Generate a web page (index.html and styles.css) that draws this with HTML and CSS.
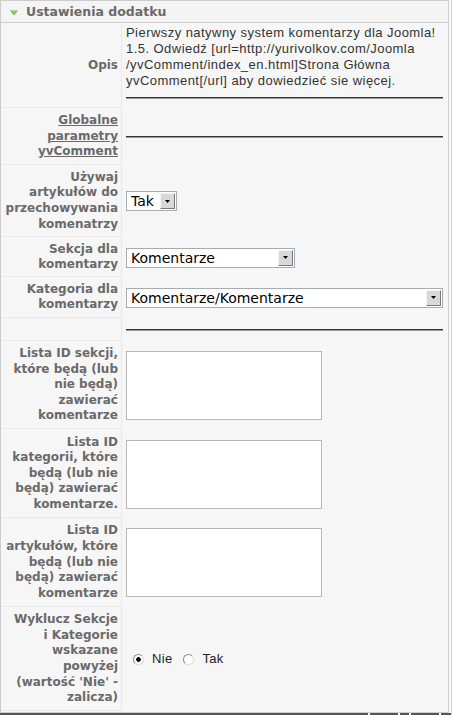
FILE: index.html
```html
<!DOCTYPE html>
<html lang="pl">
<head>
<meta charset="utf-8">
<title>Ustawienia dodatku</title>
<link rel="stylesheet" href="styles.css">
</head>
<body>
<div class="page">
  <div class="panel">
    <h3 class="toggler">
      <svg class="arrow" width="8" height="6" viewBox="0 0 8 6" aria-hidden="true"><path d="M0 0.5H8L4 5.5Z" fill="#76b83f"/><path d="M1.5 1H6.5L4 3.5Z" fill="#9ad06a"/></svg>
      <span>Ustawienia dodatku</span>
    </h3>
    <div class="content">
      <table class="paramlist">
        <tr>
          <td class="key">Opis</td>
          <td class="val val-desc">
            <div class="desc">Pierwszy natywny system komentarzy dla Joomla!<br>1.5. Odwiedź [url=http://yurivolkov.com/Joomla<br>/yvComment/index_en.html]Strona Główna<br>yvComment[/url] aby dowiedzieć sie więcej.</div>
            <hr class="rule rule-desc">
          </td>
        </tr>
        <tr>
          <td class="key"><span class="tip">Globalne<br>parametry<br>yvComment</span></td>
          <td class="val"><hr class="rule"></td>
        </tr>
        <tr>
          <td class="key">Używaj<br>artykułów do<br>przechowywania<br>komenatrzy</td>
          <td class="val">
            <div class="select">
              <select class="sel-tak"><option>Tak</option><option>Nie</option></select>
              <span class="select-btn"><svg width="5" height="3" viewBox="0 0 5 3" aria-hidden="true"><path d="M0 0H5L2.5 3Z" fill="#000"/></svg></span>
            </div>
          </td>
        </tr>
        <tr>
          <td class="key key-tight">Sekcja dla<br>komentarzy</td>
          <td class="val">
            <div class="select">
              <select class="sel-sekcja"><option>Komentarze</option></select>
              <span class="select-btn"><svg width="5" height="3" viewBox="0 0 5 3" aria-hidden="true"><path d="M0 0H5L2.5 3Z" fill="#000"/></svg></span>
            </div>
          </td>
        </tr>
        <tr>
          <td class="key key-tight">Kategoria dla<br>komentarzy</td>
          <td class="val">
            <div class="select">
              <select class="sel-kat"><option>Komentarze/Komentarze</option></select>
              <span class="select-btn"><svg width="5" height="3" viewBox="0 0 5 3" aria-hidden="true"><path d="M0 0H5L2.5 3Z" fill="#000"/></svg></span>
            </div>
          </td>
        </tr>
        <tr>
          <td class="key key-empty"></td>
          <td class="val"><hr class="rule rule-empty"></td>
        </tr>
        <tr>
          <td class="key key-tall">Lista ID sekcji,<br>które będą (lub<br>nie będą)<br>zawierać<br>komentarze</td>
          <td class="val"><textarea class="ta" rows="4" cols="30"></textarea></td>
        </tr>
        <tr>
          <td class="key key-tall">Lista ID<br>kategorii, które<br>będą (lub nie<br>będą) zawierać<br>komentarze.</td>
          <td class="val"><textarea class="ta" rows="4" cols="30"></textarea></td>
        </tr>
        <tr>
          <td class="key key-tall">Lista ID<br>artykułów, które<br>będą (lub nie<br>będą) zawierać<br>komentarze</td>
          <td class="val"><textarea class="ta" rows="4" cols="30"></textarea></td>
        </tr>
        <tr>
          <td class="key key-tall">Wyklucz Sekcje<br>i Kategorie<br>wskazane<br>powyżej<br>(wartość 'Nie' -<br>zalicza)</td>
          <td class="val">
            <div class="radios">
              <label class="radio"><input type="radio" name="exclude" checked>Nie</label>
              <label class="radio"><input type="radio" name="exclude">Tak</label>
            </div>
          </td>
        </tr>
      </table>
    </div>
  </div>
  <div class="hbar">
    <div class="hbar-track"></div>
    <div class="hbar-box hbar-a"></div>
    <div class="hbar-box hbar-b"></div>
    <div class="hbar-box hbar-c"></div>
    <div class="hbar-box hbar-d"></div>
  </div>
</div>
</body>
</html>
```
FILE: styles.css
```css
html, body {
  margin: 0;
  padding: 0;
  background: #ffffff;
}

body {
  font-family: "Liberation Sans", Arial, sans-serif;
}

.page {
  width: 451px;
  border-right: 1px solid #d0d0d0;
  background: #fafafa;
  min-height: 715px;
}

.panel {
  width: 447px;
  border: 1px solid #cccccc;
  background: #f6f6f6;
}

.toggler {
  margin: 0;
  height: 21px;
  border-bottom: 1px solid #cccccc;
  display: flex;
  align-items: center;
  padding-left: 9px;
  font: bold 12.5px/21px "DejaVu Sans", Verdana, sans-serif;
  color: #6a6a6a;
  background: #f4f4f4;
}

.toggler .arrow {
  margin: 2px 8px 0 0;
  flex: none;
}

.paramlist {
  width: 447px;
  border-collapse: separate;
  border-spacing: 1px;
  table-layout: fixed;
}

.key {
  width: 120px;
  box-sizing: border-box;
  padding: 4px 3px 4px 2px;
  background: #f6f6f6;
  border-right: 1px solid #e9e9e9;
  border-bottom: 1px solid #e9e9e9;
  text-align: right;
  vertical-align: middle;
  font: bold 12px/15.6px "DejaVu Sans", Verdana, sans-serif;
  color: #6a6a6a;
  white-space: nowrap;
}

.key-tight {
  padding-top: 3.5px;
  padding-bottom: 3.5px;
}

.key-tall {
  padding-top: 4.4px;
  padding-bottom: 4.4px;
}

.key-empty {
  padding: 0;
}

.tip {
  text-decoration: underline;
}

.val {
  padding: 0 4px 0 3px;
  vertical-align: middle;
}

.val-desc {
  padding-top: 1px;
  padding-bottom: 1px;
}

.desc {
  font: 13px/16px "Liberation Sans", Arial, sans-serif;
  letter-spacing: 0.45px;
  color: #333333;
  white-space: nowrap;
}

.rule {
  border: 0;
  border-top: 1px solid #333333;
  border-bottom: 1px solid #9a9a9a;
  height: 0;
  margin: 0;
}

.rule-desc {
  margin: 8px 0;
}

.rule-empty {
  margin: 10px 0;
}

.select {
  position: relative;
  display: inline-block;
  vertical-align: middle;
}

.select select {
  -webkit-appearance: none;
  appearance: none;
  display: block;
  box-sizing: border-box;
  height: 20px;
  margin: 0;
  border: 1px solid #a5acb2;
  border-radius: 0;
  background: #ffffff;
  font: 14px/18px "DejaVu Sans", Verdana, sans-serif;
  color: #000000;
  padding: 0 18px 0 4px;
}

.sel-tak {
  width: 51px;
}

.sel-sekcja {
  width: 169px;
}

.sel-kat {
  width: 317px;
}

.select-btn {
  position: absolute;
  top: 2px;
  right: 2px;
  width: 15px;
  height: 16px;
  box-sizing: border-box;
  background: #d8d8d8;
  border: 1px solid;
  border-color: #f4f4f4 #7a7a7a #7a7a7a #f4f4f4;
  display: flex;
  align-items: center;
  justify-content: center;
  pointer-events: none;
}

.ta {
  display: block;
  box-sizing: border-box;
  width: 196px;
  height: 69px;
  margin: 0;
  padding: 2px;
  border: 1px solid #b8b8b8;
  background: #ffffff;
  resize: none;
  font: 13px "Liberation Sans", Arial, sans-serif;
}

.radios {
  display: flex;
  align-items: center;
  padding-left: 7px;
  font: 13px/16px "Liberation Sans", Arial, sans-serif;
  letter-spacing: 0.3px;
  color: #222222;
}

.radio {
  display: flex;
  align-items: center;
  margin-right: 11px;
}

.radio input {
  -webkit-appearance: none;
  appearance: none;
  box-sizing: border-box;
  width: 11px;
  height: 11px;
  margin: 0 8px 0 0;
  border-radius: 50%;
  border: 1px solid;
  border-color: #8a8a8a #dcdcdc #dcdcdc #8a8a8a;
  background: #ffffff;
}

.radio input:checked {
  background: radial-gradient(circle, #000000 0 2px, #ffffff 2.6px);
}

.hbar {
  display: flex;
  height: 4px;
}

.hbar-track {
  width: 368px;
  border-top: 2px solid #555555;
}

.hbar-box {
  box-sizing: border-box;
  border-top: 2px solid #555555;
  border-left: 1px solid #666666;
  background: #e4e4e4;
  margin-left: 2px;
}

.hbar-a {
  width: 28px;
}

.hbar-b {
  width: 9px;
}

.hbar-c {
  width: 28px;
}

.hbar-d {
  flex: 1;
}
```
